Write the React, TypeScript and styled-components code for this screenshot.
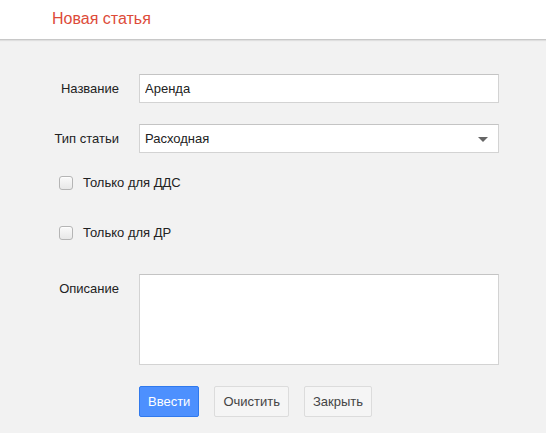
import { FunctionComponent } from "react";
import styled, { createGlobalStyle } from "styled-components";

const GlobalStyle = createGlobalStyle`
    html, body {
        margin: 0;
        padding: 0;
        background: #f2f2f2;
        font-family: "Liberation Sans", Arial, sans-serif;
    }
`;

const Page = styled.div`
    min-height: 433px;
    background: #f2f2f2;
`;

const Header = styled.div`
    height: 40px;
    display: flex;
    align-items: center;
    padding: 0 52px 2px;
    box-sizing: border-box;
    background: #fff;
    border-bottom: 1px solid #c8c8c8;
    box-shadow: 0 1px 1px rgba(0, 0, 0, 0.08);
`;

const Title = styled.h1`
    margin: 0;
    font-size: 16px;
    font-weight: normal;
    color: #dd4b39;
`;

const Form = styled.form`
    display: flex;
    flex-direction: column;
    padding-top: 34px;
`;

const Row = styled.div<{ $mt?: number; $top?: boolean }>`
    display: grid;
    grid-template-columns: 119px 360px;
    column-gap: 20px;
    align-items: ${p => (p.$top ? "start" : "center")};
    margin-top: ${p => p.$mt ?? 0}px;
`;

const Label = styled.label<{ $pt?: number }>`
    text-align: right;
    font-size: 13px;
    color: #222;
    padding-top: ${p => p.$pt ?? 0}px;
`;

const TextInput = styled.input`
    box-sizing: border-box;
    width: 100%;
    height: 29px;
    padding: 0 5px;
    border: 1px solid #d3d3d3;
    border-top-color: #c4c4c4;
    background: #fff;
    font-family: inherit;
    font-size: 13px;
    color: #222;
    outline: none;
`;

const SelectBox = styled.div`
    box-sizing: border-box;
    height: 29px;
    display: flex;
    align-items: center;
    justify-content: space-between;
    padding: 0 10px 0 5px;
    border: 1px solid #d3d3d3;
    border-top-color: #c4c4c4;
    background: #fff;
    font-size: 13px;
    color: #222;
`;

const Arrow = styled.span`
    width: 0;
    height: 0;
    border-left: 5px solid transparent;
    border-right: 5px solid transparent;
    border-top: 5px solid #666;
    margin-top: 1px;
`;

const CheckRow = styled.label<{ $mt?: number }>`
    display: flex;
    align-items: center;
    gap: 10px;
    padding-left: 59px;
    height: 29px;
    margin-top: ${p => p.$mt ?? 0}px;
    font-size: 13px;
    color: #222;
`;

const CheckBox = styled.span`
    box-sizing: border-box;
    width: 14px;
    height: 14px;
    border: 1px solid #b5b5b5;
    border-radius: 3px;
    background: linear-gradient(#fafafa, #e8e8e8);
    box-shadow: inset 0 1px 1px rgba(255, 255, 255, 0.8);
`;

const TextArea = styled.textarea`
    box-sizing: border-box;
    width: 100%;
    height: 91px;
    border: 1px solid #d3d3d3;
    border-top-color: #c4c4c4;
    background: #fff;
    resize: none;
    outline: none;
    display: block;
`;

const Buttons = styled.div`
    display: flex;
    gap: 15px;
    padding-left: 139px;
    margin-top: 21px;
`;

const Button = styled.button<{ $primary?: boolean }>`
    height: 31px;
    padding: 0 8px;
    border-radius: 2px;
    font-family: inherit;
    font-size: 13px;
    border: 1px solid ${p => (p.$primary ? "#3079ed" : "#dcdcdc")};
    background: ${p => (p.$primary ? "#4d90fe" : "#f5f5f5")};
    color: ${p => (p.$primary ? "#fff" : "#444")};
    cursor: pointer;
`;

const App: FunctionComponent = () => {
    return (
        <Page>
            <GlobalStyle />
            <Header>
                <Title>Новая статья</Title>
            </Header>
            <Form onSubmit={e => e.preventDefault()}>
                <Row>
                    <Label>Название</Label>
                    <TextInput defaultValue="Аренда" />
                </Row>
                <Row $mt={21}>
                    <Label>Тип статьи</Label>
                    <SelectBox>
                        <span>Расходная</span>
                        <Arrow />
                    </SelectBox>
                </Row>
                <CheckRow $mt={15}>
                    <CheckBox />
                    Только для ДДС
                </CheckRow>
                <CheckRow $mt={21}>
                    <CheckBox />
                    Только для ДР
                </CheckRow>
                <Row $mt={27} $top>
                    <Label $pt={7}>Описание</Label>
                    <TextArea />
                </Row>
                <Buttons>
                    <Button $primary>Ввести</Button>
                    <Button>Очистить</Button>
                    <Button>Закрыть</Button>
                </Buttons>
            </Form>
        </Page>
    );
};

export default App;
